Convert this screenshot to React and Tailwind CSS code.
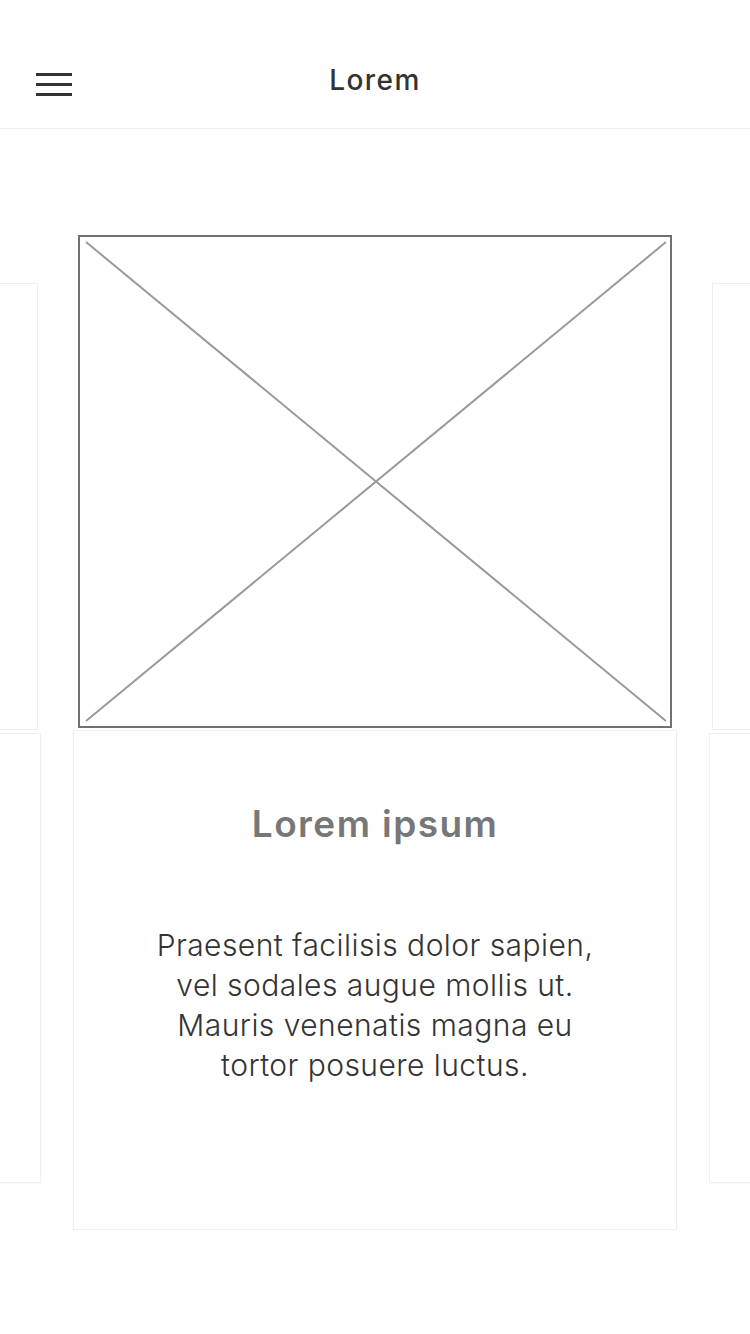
const body = [
  "Praesent facilisis dolor sapien,",
  "vel sodales augue mollis ut.",
  "Mauris venenatis magna eu",
  "tortor posuere luctus.",
];

function Placeholder() {
  return (
    <div className="mx-[5px] h-[493px] border-2 border-[#707070] bg-white">
      <svg
        className="h-full w-full"
        viewBox="0 0 590 489"
        preserveAspectRatio="none"
      >
        <line x1="6" y1="5" x2="586" y2="484" stroke="#9a9a9a" strokeWidth="2" />
        <line x1="586" y1="5" x2="6" y2="484" stroke="#9a9a9a" strokeWidth="2" />
      </svg>
    </div>
  );
}

function SideCard() {
  return (
    <div className="flex w-[560px] shrink-0 flex-col gap-[3px]">
      <div className="mx-[3px] h-[447px] border border-[#efefef]" />
      <div className="h-[450px] border border-[#efefef] shadow-[0_1px_2px_rgba(0,0,0,0.03)]" />
    </div>
  );
}

export default function App() {
  return (
    <div className="min-h-[1334px] bg-white font-['Inter',sans-serif]">
      <header className="grid h-[129px] grid-cols-[1fr_auto_1fr] items-center border-b border-[#efefef] px-9 pt-8">
        <button type="button" className="mt-2 flex w-9 flex-col gap-[7px]" aria-label="Menu">
          <span className="h-[3px] w-9 bg-[#333]" />
          <span className="h-[3px] w-9 bg-[#333]" />
          <span className="h-[3px] w-9 bg-[#333]" />
        </button>
        <h1 className="text-[28px] font-medium tracking-[1.4px] text-[#333]">Lorem</h1>
        <div />
      </header>

      <main className="flex items-center justify-center gap-8 overflow-hidden pt-[106px]">
        <SideCard />
        <div className="flex w-[604px] shrink-0 flex-col gap-[2px]">
          <Placeholder />
          <div className="flex h-[500px] flex-col items-center border border-[#efefef] pt-[70px] shadow-[0_1px_2px_rgba(0,0,0,0.03)]">
            <h2 className="text-[37px] leading-[46px] font-semibold tracking-[1.4px] text-[#777]">
              Lorem ipsum
            </h2>
            <p className="mt-[78px] text-center text-[30px] leading-[40px] font-light tracking-[0.45px] text-[#333]">
              {body.map((line) => (
                <span key={line} className="block">
                  {line}
                </span>
              ))}
            </p>
          </div>
        </div>
        <SideCard />
      </main>
    </div>
  );
}
